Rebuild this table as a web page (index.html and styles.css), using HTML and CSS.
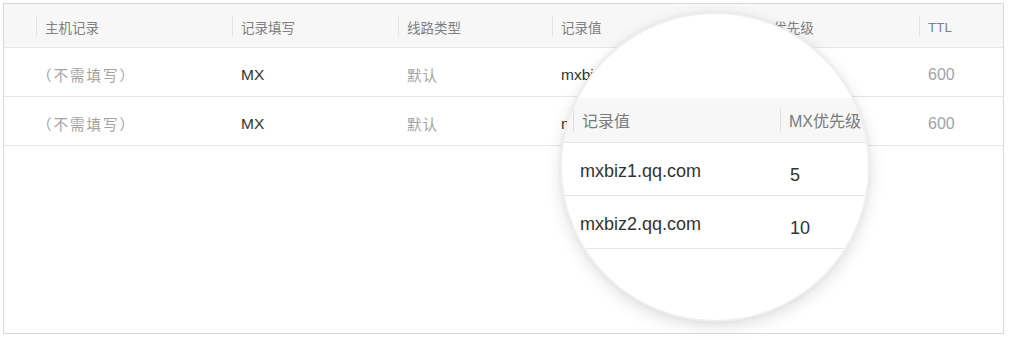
FILE: index.html
```html
<!DOCTYPE html>
<html lang="zh-CN">
<head>
<meta charset="utf-8">
<link rel="stylesheet" href="styles.css">
</head>
<body>
<div class="page">
  <div class="panel">
    <div class="table">
      <div class="cell th blank"></div>
      <div class="cell th sep">主机记录</div>
      <div class="cell th sep">记录填写</div>
      <div class="cell th sep">线路类型</div>
      <div class="cell th sep">记录值</div>
      <div class="cell th sep">MX优先级</div>
      <div class="cell th sep">TTL</div>

      <div class="cell td"></div>
      <div class="cell td muted cjk paren">（不需填写）</div>
      <div class="cell td dark">MX</div>
      <div class="cell td muted cjk">默认</div>
      <div class="cell td dark">mxbiz1.qq.com</div>
      <div class="cell td dark">5</div>
      <div class="cell td muted">600</div>

      <div class="cell td"></div>
      <div class="cell td muted cjk paren">（不需填写）</div>
      <div class="cell td dark">MX</div>
      <div class="cell td muted cjk">默认</div>
      <div class="cell td dark">mxbiz2.qq.com</div>
      <div class="cell td dark">10</div>
      <div class="cell td muted">600</div>
    </div>

    <div class="lens">
      <div class="lens-table">
        <div class="lcell lth"></div>
        <div class="lcell lth lsep">记录值</div>
        <div class="lcell lth lsep">MX优先级</div>

        <div class="lcell ltd"></div>
        <div class="lcell ltd">mxbiz1.qq.com</div>
        <div class="lcell ltd num">5</div>

        <div class="lcell ltd"></div>
        <div class="lcell ltd">mxbiz2.qq.com</div>
        <div class="lcell ltd num">10</div>
      </div>
    </div>
  </div>
</div>
</body>
</html>
```

FILE: styles.css
```css
* { box-sizing: border-box; }

html, body {
  margin: 0;
  padding: 0;
  background: #ffffff;
}

body {
  font-family: "Liberation Sans", "Noto Sans CJK SC", sans-serif;
  width: 1009px;
  height: 340px;
  overflow: hidden;
}

.page {
  padding: 3px 0 0 3px;
}

.panel {
  position: relative;
  width: 1001px;
  height: 331px;
  border: 1px solid #d9d9d9;
  background: #fff;
}

.table {
  display: grid;
  grid-template-columns: 32px 196px 166px 154px 192px 175px 84px;
  grid-template-rows: 44px 49px 49px;
}

.cell {
  display: flex;
  align-items: center;
  white-space: nowrap;
  overflow: hidden;
}

.th {
  background: #f7f7f7;
  border-bottom: 1px solid #e8e8e8;
  color: #808080;
  font-size: 13.5px;
  gap: 8px;
  padding-top: 3px;
}

.sep::before {
  content: "";
  width: 1px;
  height: 20px;
  margin-top: -3px;
  background: #e2e2e2;
  flex: none;
}

.td {
  border-bottom: 1px solid #e6e6e6;
  padding-left: 9px;
  padding-top: 5px;
  font-size: 15.5px;
}

.muted { color: #a3a3a3; font-size: 16px; }
.dark { color: #333; }

.cjk {
  font-family: "Noto Sans CJK SC", sans-serif;
  font-size: 14.5px;
  letter-spacing: 1px;
}

.paren {
  padding-left: 1px;
  letter-spacing: 2px;
}

.lens {
  position: absolute;
  left: 556px;
  top: 8px;
  width: 310px;
  height: 310px;
  border-radius: 50%;
  border: 2px solid #efefef;
  background: #fff;
  overflow: hidden;
  box-shadow: 0 5px 16px rgba(0, 0, 0, 0.12), 0 0 4px rgba(0, 0, 0, 0.05);
  padding-top: 84px;
}

.lens-table {
  display: grid;
  grid-template-columns: 11px 207px 200px;
  grid-template-rows: 45px 53px 53px;
  width: 418px;
}

.lcell {
  display: flex;
  align-items: center;
  white-space: nowrap;
}

.lth {
  background: #f7f7f7;
  border-bottom: 1px solid #e6e6e6;
  color: #7a7a7a;
  font-size: 16px;
  gap: 8px;
}

.lsep::before {
  content: "";
  width: 1px;
  height: 23px;
  background: #dedede;
  flex: none;
}

.ltd {
  border-bottom: 1px solid #e6e6e6;
  color: #333;
  font-size: 18px;
  padding-left: 7px;
  padding-top: 5px;
}

.num {
  padding-left: 10px;
  padding-top: 12px;
}
```
